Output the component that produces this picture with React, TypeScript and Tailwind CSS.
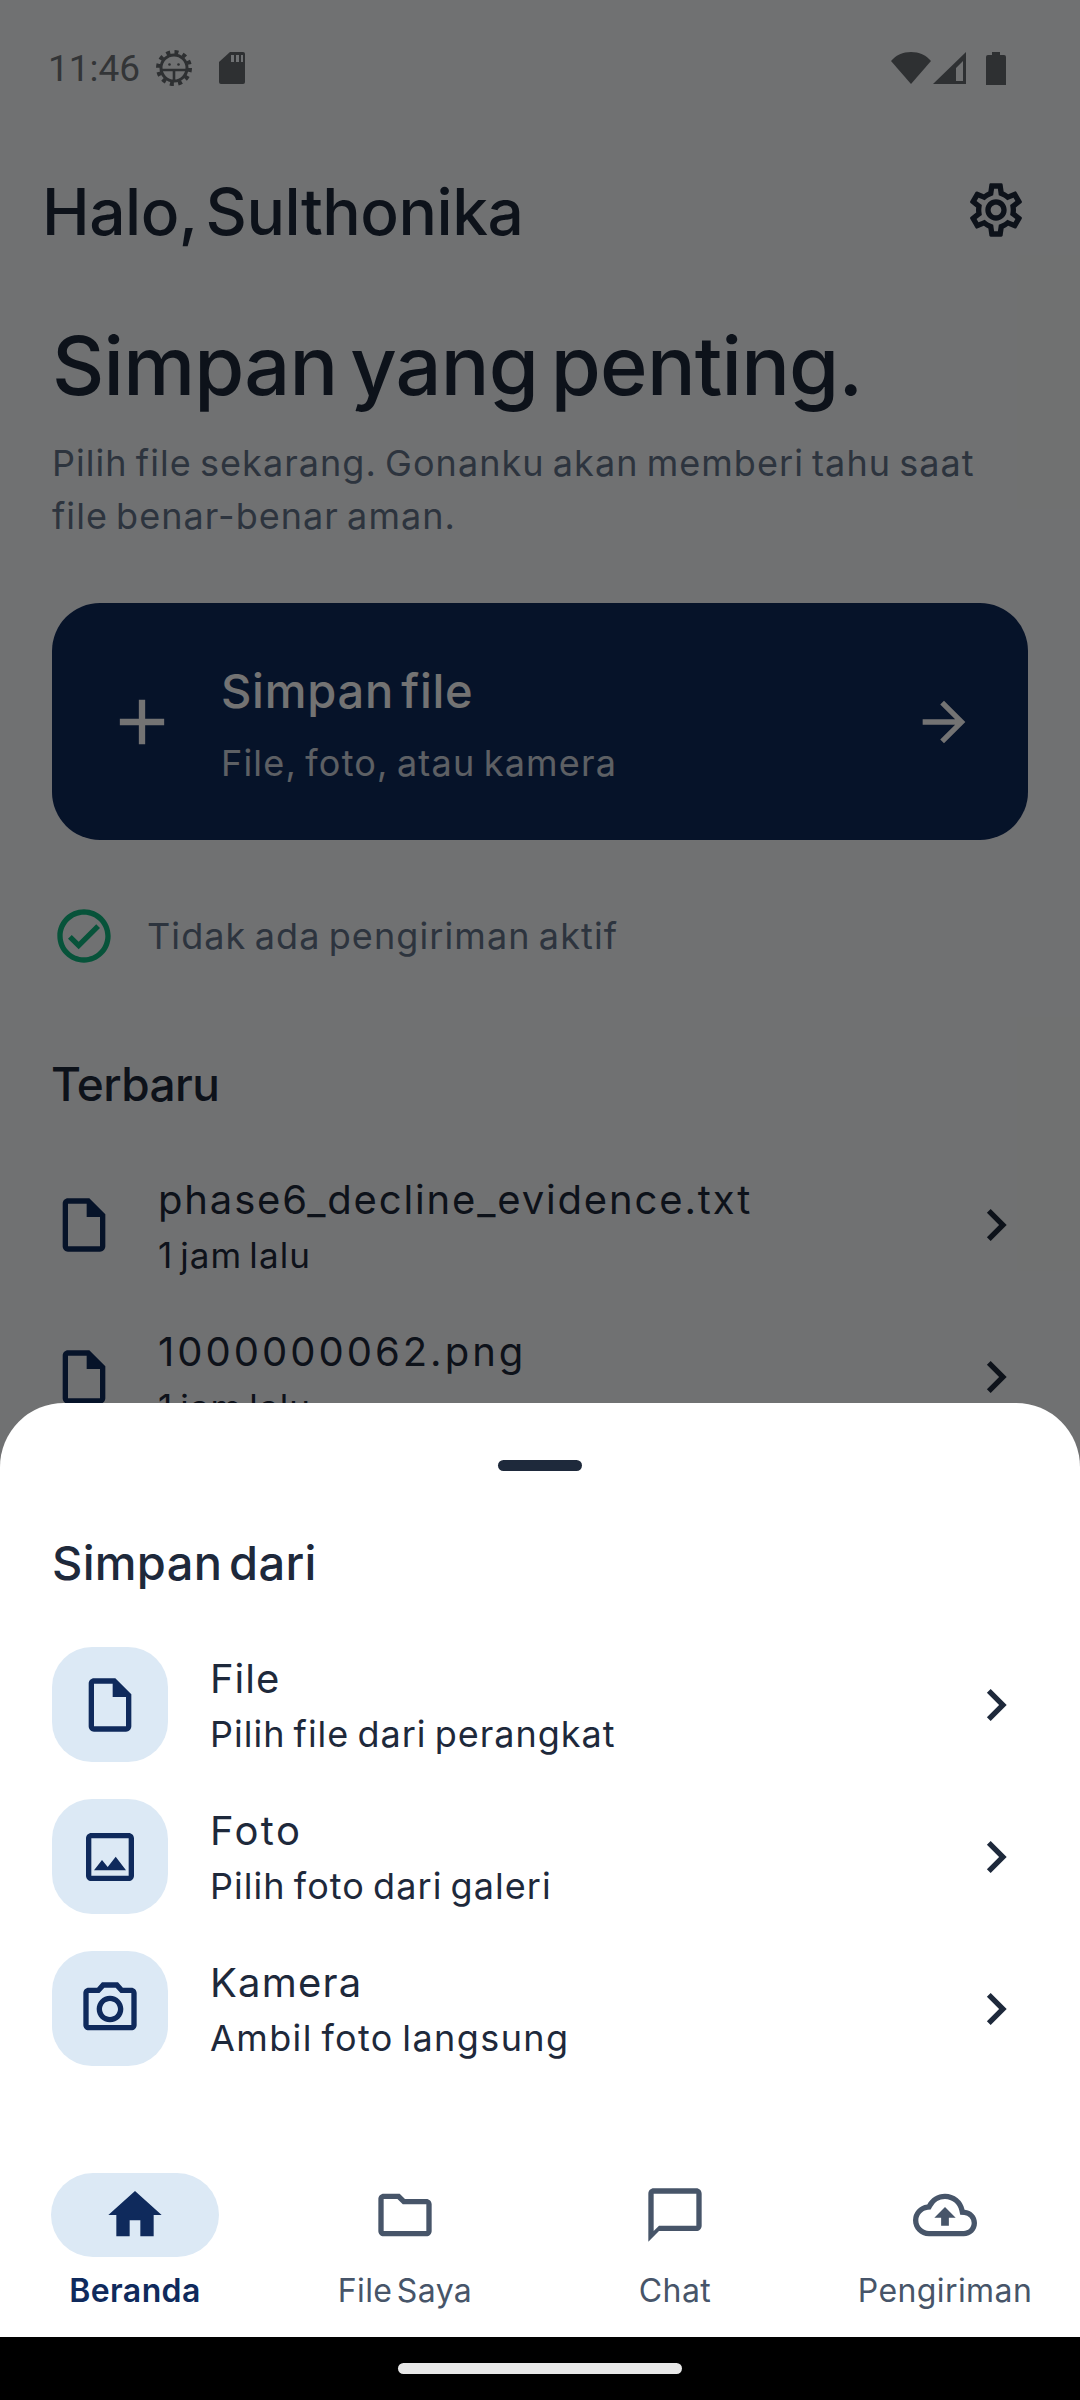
import React from "react";
import {
  MdAdd,
  MdArrowForward,
  MdChevronRight,
  MdHome,
  MdOutlineCameraAlt,
  MdOutlineChatBubbleOutline,
  MdOutlineCheckCircle,
  MdOutlineCloudUpload,
  MdOutlineFolder,
  MdOutlineImage,
  MdOutlineInsertDriveFile,
  MdOutlineSettings,
} from "react-icons/md";

const FONT = "font-['Inter','Noto_Sans',sans-serif]";

const RECENT = [
  { name: "phase6_decline_evidence.txt", time: "1 jam lalu", spacing: "tracking-[1.85px]" },
  { name: "1000000062.png", time: "1 jam lalu", spacing: "tracking-[3px]" },
];

const SOURCES = [
  { icon: MdOutlineInsertDriveFile, title: "File", desc: "Pilih file dari perangkat", titleSpacing: "tracking-[1px]", descSpacing: "tracking-[1px]" },
  { icon: MdOutlineImage, title: "Foto", desc: "Pilih foto dari galeri", titleSpacing: "tracking-[2.4px]", descSpacing: "tracking-[1.05px]" },
  { icon: MdOutlineCameraAlt, title: "Kamera", desc: "Ambil foto langsung", titleSpacing: "tracking-[1.2px]", descSpacing: "tracking-[1.4px]" },
];

const TABS = [
  { icon: MdHome, label: "Beranda", active: true },
  { icon: MdOutlineFolder, label: "File Saya", active: false },
  { icon: MdOutlineChatBubbleOutline, label: "Chat", active: false },
  { icon: MdOutlineCloudUpload, label: "Pengiriman", active: false },
];

function DebugGear() {
  return (
    <svg width="36" height="36" viewBox="0 0 36 36" fill="none" stroke="#2e3032">
      <circle cx="18" cy="18" r="16" strokeWidth="4" strokeDasharray="4 4.38" />
      <circle cx="18" cy="18" r="13" strokeWidth="3" />
      <path d="M6 20h24M18 20v11" strokeWidth="2.6" />
      <circle cx="13.5" cy="14.5" r="1.3" fill="#2e3032" stroke="none" />
      <circle cx="22.5" cy="14.5" r="1.3" fill="#2e3032" stroke="none" />
    </svg>
  );
}

function StatusBar() {
  return (
    <div className="relative z-10 flex h-[136px] items-center pl-[48px] pr-[74px] text-[#2e3032]">
      <span className="w-[108px] font-['Roboto',sans-serif] text-[37px] leading-none text-[#333537]">11:46</span>
      <DebugGear />
      <svg className="ml-[27px]" width="26" height="32" viewBox="0 0 26 32" fill="currentColor">
        <path d="M11 0h13a2 2 0 0 1 2 2v28a2 2 0 0 1-2 2H2a2 2 0 0 1-2-2V10z" />
        <path d="M12 3h3v7h-3zM17 3h3v7h-3zM22 3h2v7h-2z" fill="#6f7173" />
      </svg>
      <svg className="ml-auto" width="40" height="32" viewBox="0 0 40 32" fill="currentColor">
        <path d="M0 9C5 3 12 0 20 0s15 3 20 9L20 32z" />
      </svg>
      <svg className="ml-[2px]" width="34" height="32" viewBox="0 0 34 32" fill="currentColor">
        <path fillRule="evenodd" d="M33 0v32H0zM30 9l-7 7v13h7z" />
      </svg>
      <svg className="ml-[19px]" width="20" height="33" viewBox="0 0 20 33" fill="currentColor">
        <path d="M6 0h8v3h4a2 2 0 0 1 2 2v28H0V5a2 2 0 0 1 2-2h4z" />
      </svg>
    </div>
  );
}

function Background() {
  return (
    <div className={`h-[2400px] bg-[#f8fafc] text-[#1e293b] ${FONT}`}>
      <StatusBar />
      <div className="flex h-[152px] items-center justify-between pl-[42px] pr-[52px]">
        <h1 className="text-[64px] font-medium leading-none tracking-[-0.5px] [word-spacing:-8px]">Halo, Sulthonika</h1>
        <MdOutlineSettings size={64} className="mb-[5px]" />
      </div>

      <section className="px-[52px]">
        <h2 className="mt-[28px] h-[100px] text-[81px] font-medium leading-[100px] tracking-[-0.8px] [word-spacing:-8px]">Simpan yang penting.</h2>
        <p className="mt-[21px] w-[980px] text-[36px] leading-[53px] tracking-[1.05px] text-[#64748b] [word-spacing:-3px]">
          Pilih file sekarang. Gonanku akan memberi tahu saat
          <br />
          file benar-benar aman.
        </p>

        <div className="mt-[60px] flex h-[237px] items-center rounded-[48px] bg-[#0f2a5c] pl-[52px] pr-[52px] text-white">
          <MdAdd size={76} />
          <div className="ml-[41px] flex-1 pt-[3px]">
            <div className="text-[47px] font-medium leading-[60px] tracking-[0.75px] [word-spacing:-6px]">Simpan file</div>
            <div className="mt-[19px] text-[36px] leading-[46px] tracking-[1.2px] opacity-80 [word-spacing:-3px]">File, foto, atau kamera</div>
          </div>
          <MdArrowForward size={64} />
        </div>

        <div className="mt-[64px] flex h-[64px] items-center gap-[31px]">
          <MdOutlineCheckCircle size={64} className="text-[#10b981]" />
          <span className="text-[36px] tracking-[1.1px] text-[#64748b] [word-spacing:-3px]">Tidak ada pengiriman aktif</span>
        </div>

        <h3 className="-ml-[1px] mt-[86px] h-[60px] text-[46px] font-medium leading-[60px] tracking-[-0.6px]">Terbaru</h3>

        <div className="mt-[35px]">
          {RECENT.map((item) => (
            <div key={item.name} className="flex h-[152px] items-center">
              <MdOutlineInsertDriveFile size={64} className="text-[#0f2a5c]" />
              <div className="ml-[42px] flex-1 pt-[3px]">
                <div className={`text-[40px] leading-[54px] ${item.spacing}`}>{item.name}</div>
                <div className="mt-[3px] text-[35px] leading-[50px] tracking-[1.1px] [word-spacing:-4px]">{item.time}</div>
              </div>
              <MdChevronRight size={64} />
            </div>
          ))}
        </div>
      </section>
    </div>
  );
}

function SourceSheet() {
  return (
    <div className={`absolute inset-x-0 bottom-0 z-20 ${FONT}`}>
      <div className="flex h-[934px] flex-col rounded-t-[64px] bg-white text-[#1e293b]">
        <div className="mx-auto mt-[57px] h-[11px] w-[84px] shrink-0 rounded-full bg-[#1e293b]" />
        <h3 className="ml-[52px] mt-[62px] h-[60px] text-[47px] font-medium leading-[60px] tracking-[0.3px] [word-spacing:-6px]">Simpan dari</h3>

        <div className="mt-[54px] flex flex-col gap-[37px] px-[52px]">
          {SOURCES.map((src) => (
            <div key={src.title} className="flex h-[115px] items-center">
              <div className="flex h-[115px] w-[116px] items-center justify-center rounded-[40px] bg-[#dce9f5]">
                <src.icon size={64} className="text-[#0f2a5c]" />
              </div>
              <div className="ml-[42px] mt-[2px] flex-1">
                <div className={`text-[40px] leading-[56px] ${src.titleSpacing}`}>{src.title}</div>
                <div className={`text-[36px] leading-[54px] [word-spacing:-3px] ${src.descSpacing}`}>{src.desc}</div>
              </div>
              <MdChevronRight size={64} />
            </div>
          ))}
        </div>

        <nav className="mt-[107px] grid grid-cols-4">
          {TABS.map((tab) => (
            <div key={tab.label} className="flex flex-col items-center">
              <div className={`flex h-[84px] w-[168px] items-center justify-center rounded-full ${tab.active ? "bg-[#dce9f5] text-[#0f2a5c]" : "text-[#475569]"}`}>
                <tab.icon size={64} />
              </div>
              <span className={`mt-[14px] text-[32px] leading-[40px] tracking-[0.4px] [word-spacing:-5px] ${tab.active ? "font-semibold text-[#0f2a5c]" : "text-[#475569]"}`}>
                {tab.label}
              </span>
            </div>
          ))}
        </nav>
      </div>
      <div className="flex h-[63px] justify-center bg-black pt-[26px]">
        <div className="h-[11px] w-[284px] rounded-full bg-[#e8e8e8]" />
      </div>
    </div>
  );
}

export default function App() {
  return (
    <div className="relative h-[2400px] w-[1080px] overflow-hidden">
      <Background />
      {/* scrim behind the bottom sheet */}
      <div className="absolute inset-0 bg-black/55" />
      <SourceSheet />
    </div>
  );
}
